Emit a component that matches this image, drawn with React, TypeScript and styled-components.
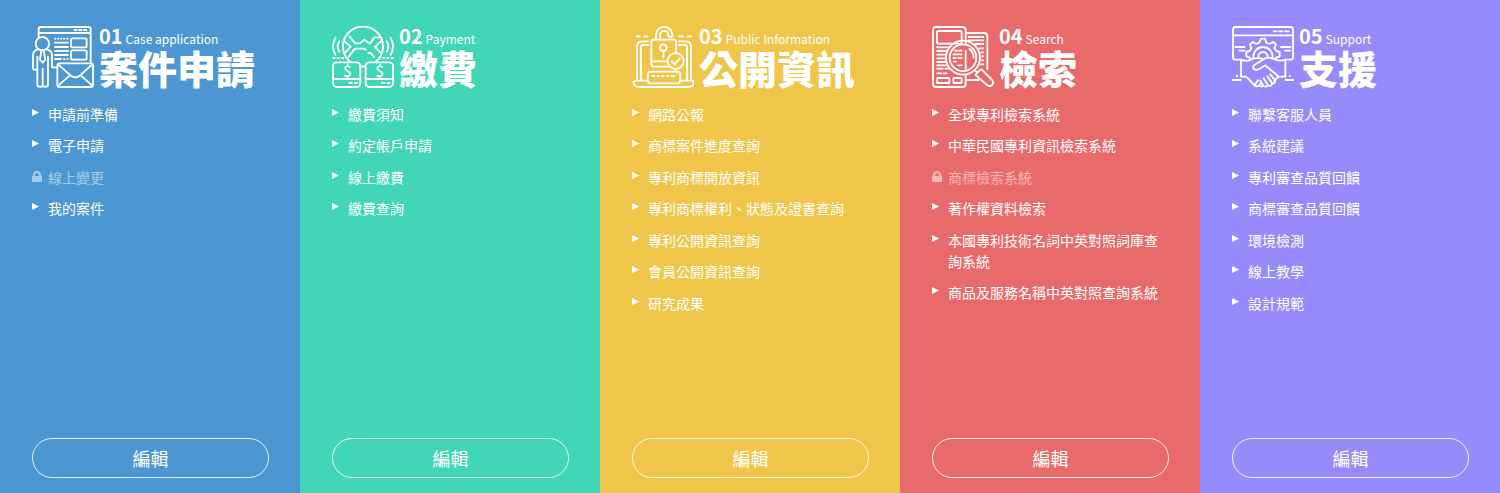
import React from "react";
import styled, { createGlobalStyle } from "styled-components";

const GlobalStyle = createGlobalStyle`
  *, *::before, *::after { box-sizing: border-box; }
  body {
    margin: 0;
    font-family: "Noto Sans CJK TC", "Noto Sans", sans-serif;
    color: #fff;
  }
`;

const Board = styled.main`
  display: grid;
  grid-template-columns: repeat(5, minmax(0, 1fr));
  min-height: 100vh;
`;

const Column = styled.section<{ $color: string }>`
  display: flex;
  flex-direction: column;
  padding: 26px 31px 15px 32px;
  background: ${(p) => p.$color};
`;

const Header = styled.header`
  display: flex;
  gap: 5px;
`;

const IconSvg = styled.svg`
  flex: none;
  width: 62px;
  height: 62px;
  fill: none;
  stroke: #fff;
  stroke-width: 5.5;
  stroke-linecap: round;
  stroke-linejoin: round;

  text {
    fill: #fff;
    stroke: none;
    font-size: 46px;
    font-weight: 500;
    text-anchor: middle;
  }
`;

const Heading = styled.div`
  display: flex;
  flex-direction: column;
  white-space: nowrap;
`;

const Caption = styled.p`
  display: flex;
  align-items: baseline;
  gap: 3px;
  margin: 0;
  font-size: 12px;
  line-height: 20px;
`;

const Index = styled.strong`
  font-size: 20px;
  font-weight: 700;
`;

const Title = styled.h2`
  margin: 0;
  font-size: 39px;
  font-weight: 900;
  line-height: 36px;
`;

const Menu = styled.ul`
  display: flex;
  flex-direction: column;
  margin: 16px 0 24px;
  padding: 0;
  list-style: none;
`;

const MenuItem = styled.li`
  display: flex;
  margin-bottom: 10px;
  font-size: 14px;
  line-height: 21px;

  &:nth-child(even) { margin-bottom: 11px; }
`;

const Marker = styled.svg`
  flex: none;
  width: 10px;
  height: 12px;
  margin: 4px 6px 0 0;
  fill: currentColor;
`;

const MenuLink = styled.a`
  color: inherit;
  text-decoration: none;
`;

const Locked = styled.span`
  display: flex;
  opacity: 0.5;
`;

const EditButton = styled.button`
  height: 40px;
  margin-top: auto;
  padding: 0;
  border: 1px solid rgba(255, 255, 255, 0.85);
  border-radius: 20px;
  background: transparent;
  color: inherit;
  font-family: inherit;
  font-size: 18px;
  line-height: 24px;
  cursor: pointer;
`;

const Icon = ({ children }: { children: React.ReactNode }) => (
  <IconSvg viewBox="6 6 186 186" aria-hidden="true">{children}</IconSvg>
);

const CaseIcon = () => (
  <Icon>
    <path d="M26 38V15q0-6 6-6H176q6 0 6 6V114M26 27H182" />
    <path d="M133 18h7M147 18h7M161 18h8" />
    <circle cx="37" cy="59" r="20" />
    <path d="M22 77q-13 3-13 18V131q0 6 6 6h7M52 77q14 3 14 18V130h14M22 98V182q0 6 6 6H48q6 0 6-6V98M38 134V187" />
    <path d="M34 79h7l5 28-8 9-8-9z" />
    <path d="M75 44h1M84 44h1M93 44h1M102 44h1M111 44h2M75 56H114M75 69H114M75 81H114M75 93H114M75 105h18M102 105h1M112 105h1" />
    <rect x="123" y="43" width="47" height="27" rx="5" />
    <rect x="123" y="79" width="47" height="28" rx="5" />
    <rect x="82" y="118" width="107" height="71" rx="7" />
    <path d="M84 121L124 156q12 8 24 0L187 121M84 185L119 155M187 185L153 155" />
  </Icon>
);

const PaymentIcon = () => (
  <Icon>
    <path d="M60 113A60 60 0 1 1 138 113M92 127H106" />
    <path d="M58 37L76 58H90L103 47 120 59 133 40H152M42 51L62 68 44 88M155 50L135 69 154 88M56 98L75 74H101L107 77M115 87H122L132 99" />
    <path d="M28 52q-10 15 0 31M16 43q-14 24 0 49M170 52q10 15 0 31M182 43q14 24 0 49" />
    <path d="M10 102h4M22 102h5M35 102h5M158 102h5M171 102h5M184 102h5" />
    <rect x="9" y="115" width="82" height="74" rx="11" />
    <rect x="107" y="115" width="82" height="74" rx="11" />
    <path d="M9 165H91M107 165H189M58 177h7M74 177h7M156 177h7M172 177h7" />
    <text x="52" y="158">$</text>
    <text x="149" y="158">$</text>
  </Icon>
);

const PublicIcon = () => (
  <Icon>
    <path d="M20 37H30M42 37H53M148 37H160M172 37H184" />
    <path d="M21 169V68q0-16 16-16H54M183 169V68q0-16-16-16H146M33 169V70q0-7 7-7H54M171 169V70q0-7-7-7H146" />
    <path d="M138 82V53q0-6-6-6H70q-6 0-6 6V121q0 7 7 7H116M64 112H110" />
    <path d="M78 46V33a24 24 0 0 1 49 0q0 6-6 6t-6-6a12 12 0 0 0-25 0V46" />
    <circle cx="100" cy="71" r="10" />
    <path d="M100 81V101" />
    <circle cx="137" cy="111" r="24" />
    <path d="M125 112L134 121 150 102" />
    <path d="M53 169V152q0-9 9-9H142q9 0 9 9V169M68 156h5M82 156h5M96 156h5M110 156h5M124 156h8" />
    <path d="M53 170H19q-6 0-9 4 2 15 20 15H174q18 0 18-15-3-4-9-4H151q-2 8-9 8H62q-7 0-9-8z" />
  </Icon>
);

const SearchIcon = () => (
  <Icon>
    <path d="M107 58V18q0-9-9-9H18q-9 0-9 9V180q0 9 9 9H98q9 0 9-9V153" />
    <rect x="21" y="21" width="74" height="38" rx="5" />
    <path d="M21 70H60M21 81H51M21 92H47M21 103H46M21 114H48M21 124H51M21 134H38M46 134H57M21 148H34M41 148H50" />
    <rect x="21" y="162" width="37" height="15" rx="2" />
    <rect x="70" y="162" width="25" height="15" rx="2" />
    <path d="M107 27H162q10 0 10 10V136M112 168H146M116 39H160M116 49H160M136 60H160M148 73H160M154 85H160M156 97H160M155 109H160M151 121H160" />
    <circle cx="99" cy="101" r="51" />
    <circle cx="99" cy="101" r="40" />
    <path d="M107 80V134M75 80H95M70 91H95M70 102H77M85 102H95M72 113H78M84 124H95M118 75q13 10 13 26" />
    <path d="M134 138L141 146M137 151L150 138Q154 135 158 139L186 168q7 8 0 15t-15 0L139 155Q136 153 137 151z" />
  </Icon>
);

const SupportIcon = () => (
  <Icon>
    <path d="M33 107H16q-7 0-7-7V17q0-8 8-8H181q8 0 8 8v83q0 7-7 7H165M9 34H189" />
    <path d="M131 22h9M148 22h9M165 22h11M16 69H44M28 80H44M153 69H181M165 80H181" />
    <path d="M61 105L59 101 49 97V84L59 81 64 72 60 61 69 54 79 60 88 56 93 44H105L109 56 119 60 129 54 138 61 133 72 139 81 149 84V97L139 101 136 105" />
    <path d="M70 102V98a29 29 0 0 1 58 0V102M85 101V98a14 14 0 0 1 28 0" />
    <path d="M33 107V158H46Q50 158 53 162L74 184q7 6 13 0l6-8M33 107q16 7 30 0t33-3M166 107V158H150q-6 0-10 5l-7 8M166 107q-15 6-29 0-25-12-38 0L73 123q-7 6-1 12 6 5 16 0L106 124 147 159" />
    <path d="M73 184L84 169M88 185q6 5 12 0l-9-15M100 185q7 6 14-1L101 163M113 184q8 5 15-4L112 157M127 178q8 1 9-8L121 151" />
    <path d="M8 168H32M20 156h1M167 168H191M179 156h1" />
  </Icon>
);

const ArrowMarker = () => (
  <Marker viewBox="0 0 10 12" aria-hidden="true"><path d="M0 1L7 4.500 0 8z" /></Marker>
);

const LockMarker = () => (
  <Marker viewBox="0 0 10 12" aria-hidden="true">
    <path fillRule="evenodd" d="M1 4V4a4 4 0 0 1 8 0v1h1v6H0V5h1zM3 5h4V4a2 2 0 0 0-4 0z" />
  </Marker>
);

type Item = { label: string; locked?: boolean };
type Panel = {
  no: string;
  en: string;
  title: string;
  color: string;
  Picture: () => React.ReactElement;
  items: Item[];
};

const panels: Panel[] = [
  {
    no: "01", en: "Case application", title: "案件申請", color: "#4c97d2", Picture: CaseIcon,
    items: [
      { label: "申請前準備" },
      { label: "電子申請" },
      { label: "線上變更", locked: true },
      { label: "我的案件" },
    ],
  },
  {
    no: "02", en: "Payment", title: "繳費", color: "#41d6b5", Picture: PaymentIcon,
    items: [
      { label: "繳費須知" },
      { label: "約定帳戶申請" },
      { label: "線上繳費" },
      { label: "繳費查詢" },
    ],
  },
  {
    no: "03", en: "Public Information", title: "公開資訊", color: "#f0c64a", Picture: PublicIcon,
    items: [
      { label: "網路公報" },
      { label: "商標案件進度查詢" },
      { label: "專利商標開放資訊" },
      { label: "專利商標權利、狀態及證書查詢" },
      { label: "專利公開資訊查詢" },
      { label: "會員公開資訊查詢" },
      { label: "研究成果" },
    ],
  },
  {
    no: "04", en: "Search", title: "檢索", color: "#e96a6a", Picture: SearchIcon,
    items: [
      { label: "全球專利檢索系統" },
      { label: "中華民國專利資訊檢索系統" },
      { label: "商標檢索系統", locked: true },
      { label: "著作權資料檢索" },
      { label: "本國專利技術名詞中英對照詞庫查詢系統" },
      { label: "商品及服務名稱中英對照查詢系統" },
    ],
  },
  {
    no: "05", en: "Support", title: "支援", color: "#968bfa", Picture: SupportIcon,
    items: [
      { label: "聯繫客服人員" },
      { label: "系統建議" },
      { label: "專利審查品質回饋" },
      { label: "商標審查品質回饋" },
      { label: "環境檢測" },
      { label: "線上教學" },
      { label: "設計規範" },
    ],
  },
];

export default function App() {
  return (
    <>
      <GlobalStyle />
      <Board lang="zh-Hant">
        {panels.map(({ no, en, title, color, Picture, items }) => (
          <Column key={no} $color={color}>
            <Header>
              <Picture />
              <Heading>
                <Caption><Index>{no}</Index> {en}</Caption>
                <Title>{title}</Title>
              </Heading>
            </Header>
            <Menu>
              {items.map(({ label, locked }) => (
                <MenuItem key={label}>
                  {locked ? (
                    <Locked><LockMarker />{label}</Locked>
                  ) : (
                    <><ArrowMarker /><MenuLink href="#">{label}</MenuLink></>
                  )}
                </MenuItem>
              ))}
            </Menu>
            <EditButton type="button">編輯</EditButton>
          </Column>
        ))}
      </Board>
    </>
  );
}
